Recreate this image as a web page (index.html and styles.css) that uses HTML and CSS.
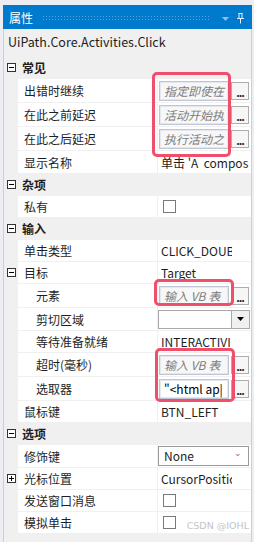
FILE: index.html
```html
<!DOCTYPE html>
<html lang="zh">
<head>
    <meta charset="UTF-8">
    <title>属性</title>
    <link rel="stylesheet" href="styles.css">
</head>
<body>
    <div class="window">
        <div class="titlebar">
            <span class="title">属性</span>
            <span class="grip"></span>
            <svg class="tb-arrow" width="7" height="4" viewBox="0 0 7 4"><path d="M0 0h7l-3.5 4z" fill="#8fbde8"/></svg>
            <svg class="tb-pin" width="9" height="12" viewBox="0 0 9 12">
                <path d="M2.5 1.5h4M3 1.5v5M6 1.5v5M1 6.5h7M4.5 6.5v5" stroke="#e4f0fb" fill="none"/>
            </svg>
        </div>
        <div class="panel">
            <div class="typename">UiPath.Core.Activities.Click</div>
            <div class="grid">
                <div class="section"><span class="toggle minus"></span><span>常见</span></div>
                <div class="row editor">
                    <div class="gutter"></div>
                    <div class="name">出错时继续</div>
                    <div class="value"><span class="expr hint">指定即使在</span><span class="dots">...</span></div>
                </div>
                <div class="row editor">
                    <div class="gutter"></div>
                    <div class="name">在此之前延迟</div>
                    <div class="value"><span class="expr hint">活动开始执</span><span class="dots">...</span></div>
                </div>
                <div class="row editor">
                    <div class="gutter"></div>
                    <div class="name">在此之后延迟</div>
                    <div class="value"><span class="expr hint">执行活动之</span><span class="dots">...</span></div>
                </div>
                <div class="row tall">
                    <div class="gutter"></div>
                    <div class="name">显示名称</div>
                    <div class="value"><span class="text">单击 'A&nbsp; compos</span></div>
                </div>

                <div class="section"><span class="toggle minus"></span><span>杂项</span></div>
                <div class="row">
                    <div class="gutter"></div>
                    <div class="name">私有</div>
                    <div class="value"><span class="check"></span></div>
                </div>

                <div class="section"><span class="toggle minus"></span><span>输入</span></div>
                <div class="row">
                    <div class="gutter"></div>
                    <div class="name">单击类型</div>
                    <div class="value"><span class="text enum">CLICK_DOUB</span></div>
                </div>
                <div class="row">
                    <div class="gutter"><span class="toggle minus"></span></div>
                    <div class="name">目标</div>
                    <div class="value"><span class="text">Target</span></div>
                </div>
                <div class="row editor">
                    <div class="gutter"></div>
                    <div class="name sub">元素</div>
                    <div class="value"><span class="expr hint">输入 VB 表</span><span class="dots">...</span></div>
                </div>
                <div class="row combo">
                    <div class="gutter"></div>
                    <div class="name sub">剪切区域</div>
                    <div class="value"><span class="pick"></span><span class="pick-btn"><svg width="7" height="4" viewBox="0 0 7 4"><path d="M0 0h7l-3.5 4z" fill="#000"/></svg></span></div>
                </div>
                <div class="row">
                    <div class="gutter"></div>
                    <div class="name sub">等待准备就绪</div>
                    <div class="value"><span class="text enum">INTERACTIVI</span></div>
                </div>
                <div class="row editor">
                    <div class="gutter"></div>
                    <div class="name sub">超时(毫秒)</div>
                    <div class="value"><span class="expr hint">输入 VB 表</span><span class="dots">...</span></div>
                </div>
                <div class="row editor">
                    <div class="gutter"></div>
                    <div class="name sub">选取器</div>
                    <div class="value"><span class="expr filled">"&lt;html ap|</span><span class="dots">...</span></div>
                </div>
                <div class="row">
                    <div class="gutter"></div>
                    <div class="name">鼠标键</div>
                    <div class="value"><span class="text">BTN_LEFT</span></div>
                </div>

                <div class="section"><span class="toggle minus"></span><span>选项</span></div>
                <div class="row combo">
                    <div class="gutter"></div>
                    <div class="name">修饰键</div>
                    <div class="value"><span class="select">None<span class="chev">&#8964;</span></span></div>
                </div>
                <div class="row">
                    <div class="gutter"><span class="toggle plus"></span></div>
                    <div class="name">光标位置</div>
                    <div class="value"><span class="text enum">CursorPositic</span></div>
                </div>
                <div class="row">
                    <div class="gutter"></div>
                    <div class="name">发送窗口消息</div>
                    <div class="value"><span class="check"></span></div>
                </div>
                <div class="row">
                    <div class="gutter"></div>
                    <div class="name">模拟单击</div>
                    <div class="value"><span class="check"></span></div>
                </div>

                <div class="mark mark-common"></div>
                <div class="mark mark-element"></div>
                <div class="mark mark-timeout"></div>
            </div>
            <div class="watermark">CSDN @IOHL</div>
        </div>
    </div>
</body>
</html>
```

FILE: styles.css
```css
body {
    margin: 0;
    background-color: #eeeef2;
    font-family: "Noto Sans CJK SC", "Microsoft YaHei", sans-serif;
    font-size: 12px;
    color: #1e1e1e;
}
.window {
    margin: 5px 2px 0 3px;
    width: 249px;
    height: 537px;
    display: flex;
    flex-direction: column;
}
.titlebar {
    height: 24px;
    background-color: #007acc;
    display: flex;
    align-items: center;
    padding: 0 7px 0 6px;
    color: #fff;
}
.grip {
    flex: 1;
    height: 5px;
    margin: 0 12px 0 9px;
    background-image: radial-gradient(circle, #5ba3df 0.7px, transparent 0.9px);
    background-size: 3px 3px;
}
.tb-arrow {
    margin-right: 7px;
    margin-top: 3px;
}
.tb-pin {
    margin-top: 1px;
}
.panel {
    flex: 1;
    position: relative;
    background-color: #f0f0f0;
    border-left: 1px solid #cfcfcf;
    border-right: 1px solid #cfcfcf;
    overflow: hidden;
}
.typename {
    height: 28px;
    line-height: 26px;
    padding-left: 4px;
    font-size: 12.5px;
}
.grid {
    position: relative;
    display: flex;
    flex-direction: column;
    gap: 1px;
    background-color: #f0f0f0;
}
.section {
    height: 21px;
    display: flex;
    align-items: center;
    font-weight: bold;
}
.section .toggle {
    margin: 0 6px 0 3px;
}
.toggle {
    width: 9px;
    height: 9px;
    box-sizing: border-box;
    border: 1px solid #333;
    background-color: #fff;
    position: relative;
    display: inline-block;
}
.toggle::before {
    content: "";
    position: absolute;
    left: 1px;
    top: 3px;
    width: 5px;
    height: 1px;
    background-color: #000;
}
.toggle.plus::after {
    content: "";
    position: absolute;
    left: 3px;
    top: 1px;
    width: 1px;
    height: 5px;
    background-color: #000;
}
.row {
    height: 21px;
    display: flex;
}
.row.tall {
    height: 22px;
}
.row.editor {
    height: 23px;
}
.row.combo {
    height: 22px;
}
.gutter {
    width: 14px;
    display: flex;
    align-items: center;
    padding-left: 3px;
    box-sizing: border-box;
}
.name {
    width: 139px;
    background-color: #fff;
    display: flex;
    align-items: center;
    padding-left: 6px;
    box-sizing: border-box;
    white-space: nowrap;
}
.name.sub {
    padding-left: 18px;
}
.value {
    flex: 1;
    margin-left: 1px;
    background-color: #fff;
    display: flex;
    align-items: center;
    overflow: hidden;
    white-space: nowrap;
}
.text {
    padding-left: 3px;
}
.text.enum {
    max-width: 71px;
    overflow: hidden;
}
.expr {
    display: block;
    flex: none;
    width: 70px;
    height: 20px;
    margin-left: 1px;
    box-sizing: border-box;
    border: 1px solid #bfc5d3;
    box-shadow: inset 0 0 0 1px #e4e7ee;
    background-color: #f7f7f7;
    padding-left: 4px;
    line-height: 18px;
    overflow: hidden;
}
.expr.hint {
    font-style: italic;
    color: #7d7d7d;
}
.expr.filled {
    background-color: #fff;
    color: #000;
}
.dots {
    flex: none;
    width: 18px;
    height: 18px;
    margin-left: 2px;
    box-sizing: border-box;
    border: 1px solid #adadad;
    background-color: #f6f6f6;
    font-weight: bold;
    font-size: 11px;
    line-height: 18px;
    text-align: center;
    letter-spacing: -1px;
}
.pick {
    width: 73px;
    height: 19px;
    box-sizing: border-box;
    border: 1px solid #a9a9a9;
    border-right: none;
    background-color: #fff;
}
.pick-btn {
    width: 19px;
    height: 19px;
    box-sizing: border-box;
    border: 1px solid #a9a9a9;
    background-color: #f0f0f0;
    display: flex;
    align-items: center;
    justify-content: center;
}
.select {
    width: 91px;
    height: 20px;
    box-sizing: border-box;
    border: 1px solid #9a9a9a;
    padding-left: 5px;
    line-height: 18px;
    display: flex;
    justify-content: space-between;
}
.chev {
    color: #777;
    font-size: 9px;
    margin-right: 6px;
    line-height: 12px;
}
.check {
    width: 13px;
    height: 13px;
    margin-left: 5px;
    box-sizing: border-box;
    border: 1px solid #7a7a7a;
    background-color: #fff;
}
.mark {
    position: absolute;
    border: 3px solid #f04f6b;
    border-radius: 5px;
    box-sizing: border-box;
}
.mark-common {
    left: 148px;
    top: 15px;
    width: 79px;
    height: 85px;
}
.mark-element {
    left: 150px;
    top: 222px;
    width: 80px;
    height: 27px;
}
.mark-timeout {
    left: 151px;
    top: 291px;
    width: 80px;
    height: 54px;
}
.watermark {
    position: absolute;
    right: 2px;
    bottom: 11px;
    font-family: "DejaVu Sans", sans-serif;
    font-size: 9.5px;
    color: #c4c4c4;
}
```
